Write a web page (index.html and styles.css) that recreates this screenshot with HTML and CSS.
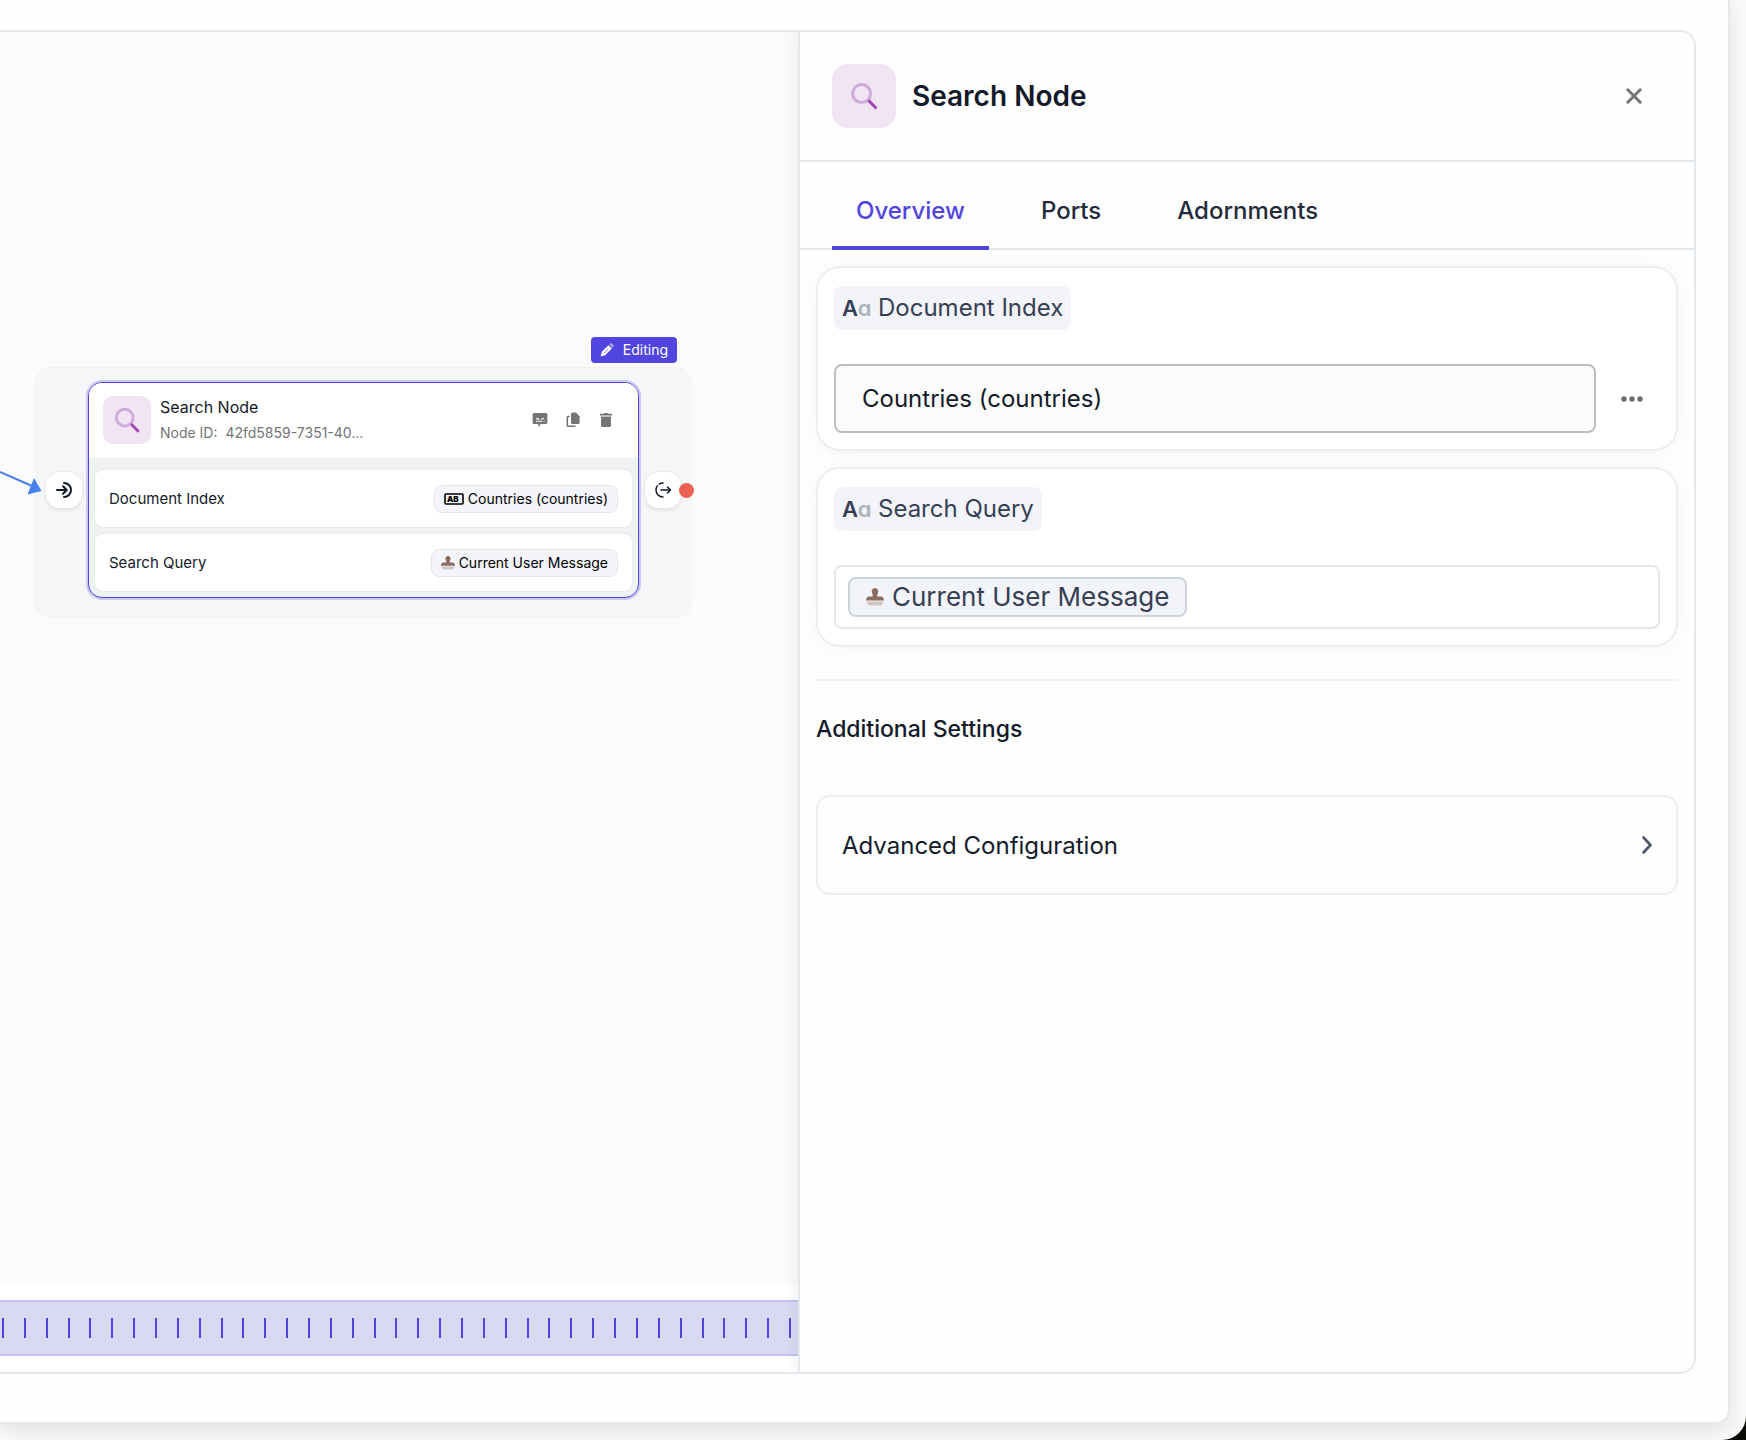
FILE: index.html
```html
<!DOCTYPE html>
<html lang="en">
<head>
    <meta charset="UTF-8">
    <meta name="viewport" content="width=device-width, initial-scale=1.0">
    <title>Search Node</title>
    <link rel="stylesheet" href="styles.css">
</head>
<body>
    <div class="window">
        <main class="shell">
            <div class="workspace">
                <section class="editor">
                    <div class="canvas">
                        <div class="node-group">
                            <span class="editing-badge">
                                <svg width="14" height="14" viewBox="0 0 14 14">
                                    <path d="M0.6 13.4 L1.8 8.8 L8.4 2.2 L11.8 5.6 L5.2 12.2 Z" fill="#fff"/>
                                    <path d="M3.5 10.5 L8.5 5.5" stroke="#5145e0" stroke-width="0.7"/>
                                    <path d="M9.2 1.5 L10.2 0.6 Q11.2 0 12.3 0.7 L13.3 1.7 Q14 2.6 13.4 3.8 L12.5 4.8 Z" fill="#fff" opacity="0.5"/>
                                </svg>
                                Editing
                            </span>

                            <button class="port" aria-label="Input port">
                                <svg width="18" height="18" viewBox="0 0 18 18" fill="none" stroke="#131a29" stroke-width="2" stroke-linecap="round" stroke-linejoin="round">
                                    <path d="M2 9 H11.5 M8 5.2 L11.8 9 L8 12.8"/>
                                    <path d="M9 2 A7 7 0 0 1 9 16"/>
                                </svg>
                            </button>

                            <article class="node">
                                <header class="node-header">
                                    <span class="node-icon">
                                        <svg width="28" height="28" viewBox="0 0 30 30" fill="none">
                                            <circle cx="12.6" cy="12.5" r="9" stroke="#d1aadd" stroke-width="3"/>
                                            <path d="M19.4 19.4 L27.5 27.5" stroke="#9f46b4" stroke-width="3"/>
                                        </svg>
                                    </span>
                                    <div class="node-heading">
                                        <h2>Search Node</h2>
                                        <p>Node ID:&nbsp; 42fd5859-7351-40...</p>
                                    </div>
                                    <div class="node-actions">
                                        <button aria-label="Comment">
                                            <svg width="16" height="16" viewBox="0 0 16 16">
                                                <path d="M2 1 H14 Q15.4 1 15.4 2.5 V10.5 Q15.4 12 14 12 H9 L6.2 15 V12 H2 Q0.6 12 0.6 10.5 V2.5 Q0.6 1 2 1 Z" fill="#757575"/>
                                                <path d="M4 9.3 H10 M11.5 9.3 H12.5 M4 6.9 H7.4 M9 7.6 L12 6.2" stroke="#fff" stroke-width="1.1"/>
                                            </svg>
                                        </button>
                                        <button aria-label="Duplicate">
                                            <svg width="16" height="16" viewBox="0 0 16 16">
                                                <path d="M7.6 0.6 H11 L14.6 4.2 V10.4 Q14.6 12 13 12 H7.6 Q6 12 6 10.4 V2.2 Q6 0.6 7.6 0.6 Z" fill="#757575"/>
                                                <path d="M4.6 4.5 H3.2 Q2.3 4.5 2.3 5.4 V13.4 Q2.3 14.3 3.2 14.3 H9.2 Q10 14.3 10 13.5" fill="none" stroke="#757575" stroke-width="1.6"/>
                                            </svg>
                                        </button>
                                        <button aria-label="Delete">
                                            <svg width="16" height="16" viewBox="0 0 16 16">
                                                <path d="M2 1.8 H5.5 L6.5 1 H9.5 L10.5 1.8 H14 V3.6 H2 Z" fill="#757575"/>
                                                <path d="M3 4.4 H13 V13.6 Q13 15 11.6 15 H4.4 Q3 15 3 13.6 Z" fill="#757575"/>
                                            </svg>
                                        </button>
                                    </div>
                                </header>
                                <div class="node-body">
                                    <div class="node-row">
                                        <span>Document Index</span>
                                        <span class="value-chip">
                                            <svg width="20" height="12" viewBox="0 0 20 12">
                                                <rect x="1" y="1" width="18" height="10" rx="1" fill="none" stroke="#000" stroke-width="1.6"/>
                                                <text x="3" y="9" class="ab-text">AB</text>
                                            </svg>
                                            Countries (countries)
                                        </span>
                                    </div>
                                    <div class="node-row">
                                        <span>Search Query</span>
                                        <span class="value-chip">
                                            <svg width="14" height="14" viewBox="0 0 18 18">
                                                <path d="M9 0 A3.4 3.4 0 0 1 12 4.8 Q11 6.8 11.3 8.5 H14.5 Q18 8.8 18 12.5 H0 Q0 8.8 3.5 8.5 H6.7 Q7 6.8 6 4.8 A3.4 3.4 0 0 1 9 0 Z" fill="#8c6d62"/>
                                                <path d="M1 13.5 H17 Q17 17.5 14 17.5 H4 Q1 17.5 1 13.5 Z" fill="#d1c5c1"/>
                                            </svg>
                                            Current User Message
                                        </span>
                                    </div>
                                </div>
                            </article>

                            <button class="port" aria-label="Output port">
                                <svg width="18" height="18" viewBox="0 0 18 18" fill="none" stroke="#131a29" stroke-width="1.5" stroke-linecap="round" stroke-linejoin="round">
                                    <path d="M7 9 H16.5 M13.5 6 L16.5 9 L13.5 12"/>
                                    <path d="M9 2 A7 7 0 0 0 9 16" stroke-dasharray="4 2.5 30"/>
                                </svg>
                            </button>
                            <span class="port-dot"></span>
                        </div>

                        <svg class="edge" width="46" height="40" viewBox="0 0 46 40">
                            <path d="M0 12 L32 26" stroke="#4a80ec" stroke-width="2" fill="none"/>
                            <path d="M34 18 L41.5 31 L27.5 34.5 Z" fill="#4a80ec"/>
                        </svg>
                    </div>

                    <div class="timeline">
                        <div class="ticks">
                            <i></i><i></i><i></i><i></i><i></i><i></i><i></i><i></i><i></i><i></i>
                            <i></i><i></i><i></i><i></i><i></i><i></i><i></i><i></i><i></i><i></i>
                            <i></i><i></i><i></i><i></i><i></i><i></i><i></i><i></i><i></i><i></i>
                            <i></i><i></i><i></i><i></i><i></i><i></i><i></i>
                        </div>
                    </div>
                </section>

                <aside class="panel">
                    <header class="panel-header">
                        <span class="panel-icon">
                            <svg width="30" height="30" viewBox="0 0 30 30" fill="none">
                                <circle cx="12.6" cy="12.5" r="9" stroke="#d1aadd" stroke-width="3"/>
                                <path d="M19.4 19.4 L27.5 27.5" stroke="#9f46b4" stroke-width="3"/>
                            </svg>
                        </span>
                        <h1>Search Node</h1>
                        <button class="close-button" aria-label="Close">
                            <svg width="16" height="16" viewBox="0 0 16 16" stroke="#757575" stroke-width="3" stroke-linecap="round">
                                <path d="M1.8 1.8 L14.2 14.2 M14.2 1.8 L1.8 14.2"/>
                            </svg>
                        </button>
                    </header>

                    <nav class="tabs" role="tablist">
                        <button class="tab active" role="tab" aria-selected="true">Overview</button>
                        <button class="tab" role="tab" aria-selected="false">Ports</button>
                        <button class="tab" role="tab" aria-selected="false">Adornments</button>
                    </nav>

                    <div class="panel-content">
                        <div class="field">
                            <label class="field-label" for="documentIndex">
                                <span class="type-icon" aria-hidden="true">A<span>a</span></span>
                                Document Index
                            </label>
                            <div class="field-control">
                                <select id="documentIndex" class="index-select">
                                    <option>Countries (countries)</option>
                                </select>
                                <button class="more-button" aria-label="More options">
                                    <svg width="22" height="6" viewBox="0 0 22 6" fill="#6f6f6f">
                                        <circle cx="3" cy="3" r="2.7"/>
                                        <circle cx="11" cy="3" r="2.7"/>
                                        <circle cx="19" cy="3" r="2.7"/>
                                    </svg>
                                </button>
                            </div>
                        </div>

                        <div class="field">
                            <label class="field-label" for="searchQuery">
                                <span class="type-icon" aria-hidden="true">A<span>a</span></span>
                                Search Query
                            </label>
                            <div class="token-box">
                                <span class="token">
                                    <svg width="18" height="18" viewBox="0 0 18 18">
                                        <path d="M9 0 A3.4 3.4 0 0 1 12 4.8 Q11 6.8 11.3 8.5 H14.5 Q18 8.8 18 12.5 H0 Q0 8.8 3.5 8.5 H6.7 Q7 6.8 6 4.8 A3.4 3.4 0 0 1 9 0 Z" fill="#8c6d62"/>
                                        <path d="M1 13.5 H17 Q17 17.5 14 17.5 H4 Q1 17.5 1 13.5 Z" fill="#d1c5c1"/>
                                    </svg>
                                    Current User Message
                                </span>
                                <input type="text" id="searchQuery">
                            </div>
                        </div>

                        <section class="settings">
                            <h2>Additional Settings</h2>
                            <button class="advanced-button">
                                Advanced Configuration
                                <svg width="12" height="20" viewBox="0 0 12 20" fill="none" stroke="#4f566b" stroke-width="2.6" stroke-linecap="round" stroke-linejoin="round">
                                    <path d="M2.5 2.5 L9.5 10 L2.5 17.5"/>
                                </svg>
                            </button>
                        </section>
                    </div>
                </aside>
            </div>
        </main>
    </div>
</body>
</html>
```
FILE: styles.css
```css
* {
    box-sizing: border-box;
}

body {
    margin: 0;
    background-color: #0b0a04;
    font-family: Inter, "Liberation Sans", sans-serif;
    color: #131a29;
}

h1, h2, p {
    margin: 0;
}

button, input, select {
    font-family: inherit;
}

button {
    color: inherit;
    border: none;
    background: none;
    padding: 0;
    cursor: pointer;
}

svg {
    display: block;
    flex-shrink: 0;
}

.window {
    display: flex;
    min-height: 100vh;
    padding: 0 16px 16px 0;
    background-color: #fafafa;
    border-bottom-right-radius: 24px;
    overflow: hidden;
}

.shell {
    display: flex;
    flex: 1;
    padding: 30px 32px 48px 0;
    background-color: #fefefe;
    border: 2px solid #e3e8ee;
    border-width: 0 2px 2px 0;
    border-bottom-right-radius: 14px;
    box-shadow: 0 6px 20px rgba(0, 0, 0, 0.11);
}

.workspace {
    display: grid;
    grid-template-columns: 57fr 64fr;
    flex: 1;
    border: 2px solid #e3e7ee;
    border-left: none;
    border-radius: 0 16px 16px 0;
    overflow: hidden;
}

/* Editor side */
.editor {
    display: flex;
    flex-direction: column;
    min-width: 0;
}

.canvas {
    position: relative;
    flex: 1;
    background-color: #fbfbfb;
    overflow: hidden;
}

.edge {
    position: absolute;
    top: 428px;
    left: 0;
}

.node-group {
    position: absolute;
    top: 335px;
    left: 35px;
    display: flex;
    align-items: center;
    gap: 6px;
    padding: 14px 10px 19px;
    background-color: #f5f6f8;
    border: 1px solid #f2f3f5;
    border-radius: 16px;
}

.editing-badge {
    position: absolute;
    top: -31px;
    right: 14px;
    display: flex;
    align-items: center;
    gap: 9px;
    padding: 0 9px;
    line-height: 26px;
    font-size: 14px;
    color: #fff;
    background-color: #5145e0;
    border-radius: 4px;
}

.port {
    display: flex;
    align-items: center;
    justify-content: center;
    width: 36px;
    height: 36px;
    background-color: #fff;
    border-radius: 14px;
    box-shadow: 0 0 0 1px #e9ebf1, 0 2px 4px rgba(0, 0, 0, 0.1);
}

.port-dot {
    position: absolute;
    top: 115px;
    right: -3px;
    width: 15px;
    height: 15px;
    border-radius: 50%;
    background-color: #ea6153;
}

.node {
    width: 551px;
    background-color: #f1f2f4;
    border: 1px solid #5145e0;
    border-radius: 14px;
    box-shadow: 0 0 0 2px #cdc9ec;
    overflow: hidden;
}

.node-header {
    display: flex;
    align-items: center;
    gap: 9px;
    padding: 11px 24px 12px 14px;
    background-color: #fff;
}

.node-icon {
    display: flex;
    align-items: center;
    justify-content: center;
    width: 48px;
    height: 48px;
    border-radius: 10px;
    background-color: #f1e4f3;
}

.node-heading {
    flex: 1;
}

.node-heading h2 {
    font-size: 16px;
    font-weight: 400;
    line-height: 26px;
}

.node-heading p {
    font-size: 14px;
    line-height: 26px;
    color: #757575;
}

.node-actions {
    display: flex;
    gap: 17px;
}

.node-body {
    display: flex;
    flex-direction: column;
    gap: 7px;
    padding: 12px 6px 6px;
}

.node-row {
    display: flex;
    align-items: center;
    justify-content: space-between;
    height: 57px;
    padding: 0 14px;
    font-size: 15px;
    background-color: #fff;
    border-radius: 8px;
    box-shadow: 0 0 2px rgba(0, 0, 0, 0.12);
}

.value-chip {
    display: flex;
    align-items: center;
    gap: 4px;
    padding: 0 9px;
    font-size: 14px;
    line-height: 26px;
    color: #000;
    background-color: #f4f5fa;
    border: 1px solid #e3e6ec;
    border-radius: 8px;
}

.ab-text {
    font-size: 8px;
    font-weight: 900;
}

.timeline {
    padding: 16px 0;
    background-color: #fff;
    box-shadow: 0 0 16px rgba(0, 0, 0, 0.06);
}

.ticks {
    display: flex;
    justify-content: space-between;
    padding: 16px 7px 16px 2px;
    background-color: #dad9f4;
    border: solid #c5c1f0;
    border-width: 2px 0;
}

.ticks i {
    width: 2px;
    height: 20px;
    background-color: #5145e0;
}

/* Properties panel */
.panel {
    position: relative;
    min-width: 0;
    background-color: #fefefe;
    border-left: 2px solid #e3e7ee;
    box-shadow: 0 0 16px rgba(0, 0, 0, 0.08);
}

.panel-header {
    display: flex;
    align-items: center;
    gap: 16px;
    padding: 32px 52px 32px 32px;
    border-bottom: 2px solid #e3e7ee;
}

.panel-icon {
    display: flex;
    align-items: center;
    justify-content: center;
    width: 64px;
    height: 64px;
    border-radius: 16px;
    background-color: #f1e4f3;
}

.panel-header h1 {
    flex: 1;
    font-size: 28px;
    font-weight: 600;
    line-height: 40px;
}

.tabs {
    display: flex;
    gap: 28px;
    height: 88px;
    padding: 12px 32px 0;
    border-bottom: 2px solid #e3e7ee;
}

.tab {
    height: 76px;
    padding: 0 24px 4px;
    font-size: 24px;
    font-weight: 500;
    color: #232b3a;
    border-top: 4px solid transparent;
    border-bottom: 4px solid transparent;
}

.tab.active {
    color: #5145e0;
    border-bottom-color: #5145e0;
}

.panel-content {
    padding: 16px;
}

.field {
    margin-bottom: 16px;
    padding: 18px 16px 16px;
    background-color: #fff;
    border: 2px solid #eee;
    border-radius: 24px;
    box-shadow: 0 2px 20px rgba(0, 0, 0, 0.04);
}

.field-label {
    display: flex;
    align-items: center;
    gap: 8px;
    width: fit-content;
    margin-bottom: 34px;
    padding: 0 8px;
    font-size: 24px;
    line-height: 44px;
    color: #364054;
    background-color: #f3f4f9;
    border-radius: 8px;
}

.type-icon {
    width: 28px;
    font-size: 22px;
    font-weight: 600;
    font-feature-settings: "cv11";
}

.type-icon span {
    color: #adb2bc;
}

.field-control {
    display: flex;
    align-items: center;
}

.index-select {
    appearance: none;
    flex: 1;
    height: 69px;
    padding: 0 26px;
    font-size: 24px;
    color: #131a29;
    background-color: #fbfbfb;
    border: 2px solid #bdbdbd;
    border-radius: 8px;
}

.more-button {
    padding: 24px 17px 24px 25px;
}

.token-box {
    display: flex;
    align-items: center;
    height: 64px;
    padding: 0 12px;
    border: 2px solid #e3e7ee;
    border-radius: 8px;
}

.token {
    display: flex;
    align-items: center;
    gap: 8px;
    padding: 0 16px;
    font-size: 26px;
    line-height: 36px;
    color: #364054;
    background-color: #f3f4f9;
    border: 2px solid #cdd3dc;
    border-radius: 8px;
}

.token-box input {
    flex: 1;
    min-width: 0;
    font-size: 26px;
    border: none;
    outline: none;
    background: none;
}

.settings {
    margin-top: 32px;
    padding-top: 30px;
    border-top: 2px solid #f0f0f0;
}

.settings h2 {
    margin-bottom: 48px;
    font-size: 23px;
    font-weight: 500;
    line-height: 36px;
}

.advanced-button {
    display: flex;
    align-items: center;
    justify-content: space-between;
    width: 100%;
    height: 100px;
    padding: 0 23px 0 24px;
    font-size: 24px;
    border: 2px solid #eee;
    border-radius: 14px;
}
```
